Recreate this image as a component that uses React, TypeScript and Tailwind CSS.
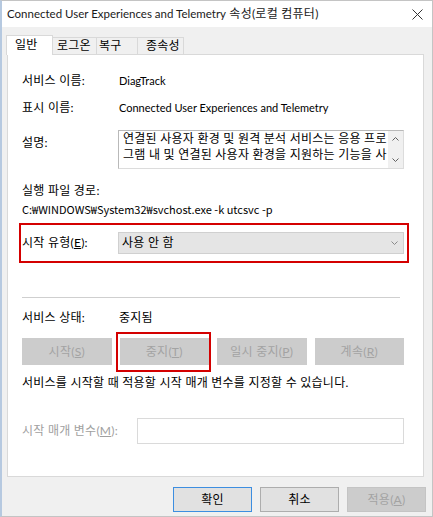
import React from "react";

const FONT = "font-['Lato','Noto_Sans_CJK_KR',sans-serif]";

// Latin runs: the dialog font sets Latin narrower than Hangul
function L({ children, cjk = false, big = false }: { children: React.ReactNode; cjk?: boolean; big?: boolean }) {
  const size = big ? "text-[11.5px]" : "text-[11px]";
  return (
    <span className={cjk ? `font-['Noto_Sans_CJK_KR',sans-serif] ${size} tracking-normal` : `${size} tracking-normal`}>
      {children}
    </span>
  );
}

function CloseIcon() {
  return (
    <svg width="11" height="11" viewBox="0 0 11 11" fill="none" stroke="#333" strokeWidth="1">
      <path d="M0.5 0.5 L10.5 10.5 M10.5 0.5 L0.5 10.5" />
    </svg>
  );
}

function Chevron({ up = false, color = "#666" }: { up?: boolean; color?: string }) {
  return (
    <svg width="7" height="4" viewBox="0 0 7 4" fill="none" stroke={color} strokeWidth="1">
      {up ? <path d="M0.5 3.5 L3.5 0.5 L6.5 3.5" /> : <path d="M0.5 0.5 L3.5 3.5 L6.5 0.5" />}
    </svg>
  );
}

function Tab({ label, active = false, w, pl }: { label: string; active?: boolean; w: string; pl: string }) {
  return active ? (
    <div className={`relative z-10 -mb-px h-[20px] ${w} ${pl} border border-b-0 border-[#d9d9d9] bg-white leading-[18px]`}>{label}</div>
  ) : (
    <div className={`h-[17px] ${w} ${pl} border-t border-r border-[#d9d9d9] bg-[#f0f0f0] leading-[16px]`}>{label}</div>
  );
}

function Row({ label, children }: { label: React.ReactNode; children: React.ReactNode }) {
  return (
    <div className="flex h-4 leading-4">
      <div className="w-[97px] shrink-0">{label}</div>
      <div>{children}</div>
    </div>
  );
}

function DisabledButton({ children }: { children: React.ReactNode }) {
  return (
    <div className="flex h-[27px] items-center justify-center bg-[#cccccc] text-[#a3a3a3]">{children}</div>
  );
}

export default function App() {
  return (
    <div className={`${FONT} flex h-[517px] w-[433px] flex-col border border-l-2 border-[#c4c4c4] border-l-[#b6c9e0] bg-[#f0f0f0] text-[12px] tracking-[0.25px] text-black`}>
      {/* title bar */}
      <div className="flex h-[26px] shrink-0 items-center justify-between bg-white pl-[5px]">
        <span className="leading-4 text-[#1a1a1a]">
          <L big>Connected User Experiences and Telemetry</L> 속성(로컬 컴퓨터)
        </span>
        <div className="flex h-[26px] w-[30px] items-center justify-center">
          <CloseIcon />
        </div>
      </div>

      {/* tabs */}
      <div className="flex h-[27px] shrink-0 items-end pl-[4px]">
        <Tab label="일반" active w="w-[47px]" pl="pl-[8px]" />
        <Tab label="로그온" w="w-[44px]" pl="pl-[4px]" />
        <Tab label="복구" w="w-[41px]" pl="pl-[2px]" />
        <Tab label="종속성" w="w-[46px]" pl="pl-[8px]" />
      </div>

      {/* panel */}
      <div className="ml-[5px] mr-[8px] h-[423px] shrink-0 border border-[#d9d9d9] bg-white pl-[14px] pr-[19px] pt-[18px]">
        <Row label="서비스 이름:">
          <L>DiagTrack</L>
        </Row>
        <div className="mt-[11px]">
          <Row label="표시 이름:">
            <L>Connected User Experiences and Telemetry</L>
          </Row>
        </div>

        <div className="mt-[14px] flex">
          <div className="w-[96px] shrink-0 pt-[5px] leading-4">설명:</div>
          <div className="flex h-[39px] flex-1 border border-[#b9b9b9] border-b-[#dcdcdc] border-r-[#dcdcdc]">
            <div className="flex-1 overflow-hidden whitespace-nowrap pl-[4px] leading-4">
              <div>연결된 사용자 환경 및 원격 분석 서비스는 응용 프로</div>
              <div>그램 내 및 연결된 사용자 환경을 지원하는 기능을 사</div>
            </div>
            <div className="flex w-[15px] flex-col items-center justify-between bg-[#f0f0f0] py-[6px]">
              <Chevron up color="#606060" />
              <Chevron color="#606060" />
            </div>
          </div>
        </div>

        <div className="mt-[14px] leading-4">실행 파일 경로:</div>
        <div className="mt-[2px] leading-4">
          <L cjk>C:₩WINDOWS₩System32₩svchost.exe -k utcsvc -p</L>
        </div>

        <div className="-ml-[3px] -mr-[5px] mt-[5px] flex h-[40px] items-center border-2 border-[#d40000] pr-[3px]">
          <div className="w-[97px] shrink-0 pl-[1px] leading-4">
            시작 유형(<u>E</u>):
          </div>
          <div className="flex h-[22px] flex-1 items-center justify-between border border-[#d0d0d0] bg-[#e5e5e5] pl-[3px] pr-[5px]">
            <span className="leading-4">사용 안 함</span>
            <Chevron color="#8a8a8a" />
          </div>
        </div>

        <div className="mr-[4px] mt-[34px] h-px bg-[#cfcfcf]" />

        <div className="mt-[12px]">
          <Row label="서비스 상태:">중지됨</Row>
        </div>

        <div className="mt-[12px] grid grid-cols-4 gap-x-[8px]">
          <DisabledButton>
            시작(<u>S</u>)
          </DisabledButton>
          <div className="relative">
            <DisabledButton>
              중지(<u>T</u>)
            </DisabledButton>
            <div className="absolute -bottom-[7px] -left-[4px] -right-[2px] -top-[6px] border-2 border-[#d40000]" />
          </div>
          <DisabledButton>
            일시 중지(<u>P</u>)
          </DisabledButton>
          <DisabledButton>
            계속(<u>R</u>)
          </DisabledButton>
        </div>

        <div className="mt-[10px] leading-4">서비스를 시작할 때 적용할 시작 매개 변수를 지정할 수 있습니다.</div>

        <div className="mt-[27px] flex h-[26px] items-center">
          <div className="w-[115px] shrink-0 leading-4 text-[#a0a0a0]">
            시작 매개 변수(<u>M</u>):
          </div>
          <div className="h-[26px] flex-1 border border-[#dadada] bg-white" />
        </div>
      </div>

      {/* dialog buttons */}
      <div className="flex justify-end gap-[8px] pr-[6px] pt-[10px]">
        <div className="flex h-[25px] w-[79px] items-center justify-center border border-[#3d8ee0] bg-[#e1e1e1]">확인</div>
        <div className="flex h-[25px] w-[79px] items-center justify-center border border-[#adadad] bg-[#e1e1e1]">취소</div>
        <div className="flex h-[25px] w-[79px] items-center justify-center border border-[#c4c4c4] bg-[#cccccc] text-[#a3a3a3]">
          적용(<u>A</u>)
        </div>
      </div>
    </div>
  );
}
